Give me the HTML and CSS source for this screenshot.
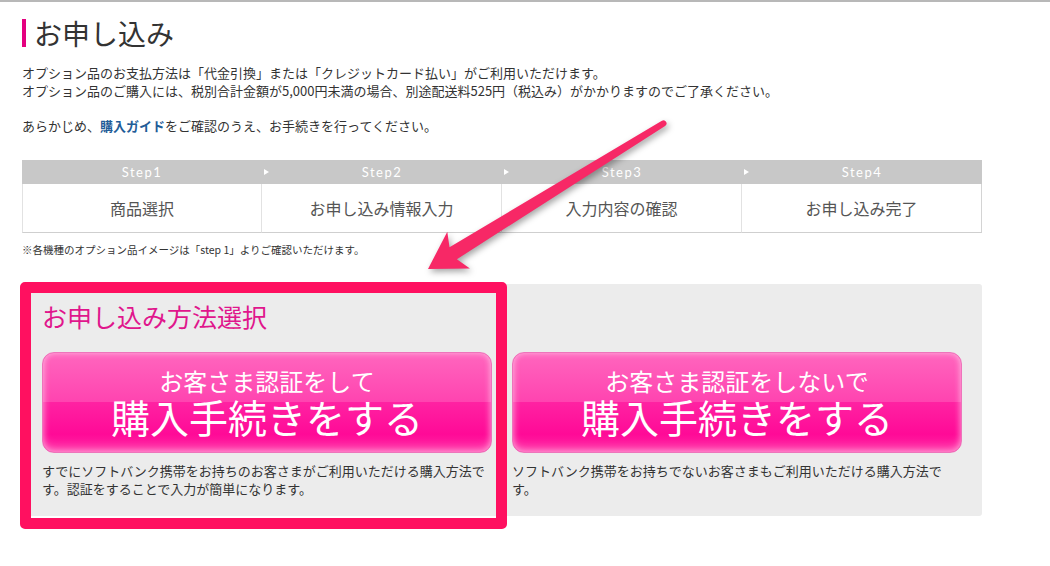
FILE: index.html
```html
<!DOCTYPE html>
<html lang="ja">

<head>
    <meta charset="UTF-8">
    <meta name="viewport" content="width=device-width, initial-scale=1.0">
    <title>お申し込み</title>
    <link rel="stylesheet" href="styles.css">
</head>

<body>
    <div class="page">
        <h1 class="title">お申し込み</h1>
        <p class="lead">オプション品のお支払方法は「代金引換」または「クレジットカード払い」がご利用いただけます。<br>オプション品のご購入には、税別合計金額が5,000円未満の場合、別途配送料525円（税込み）がかかりますのでご了承ください。</p>
        <p class="lead">あらかじめ、<a class="guide" href="#">購入ガイド</a>をご確認のうえ、お手続きを行ってください。</p>

        <div class="steps">
            <div class="step">
                <div class="step-no">Step1</div>
                <div class="step-name">商品選択</div>
            </div>
            <div class="step">
                <div class="step-no">Step2</div>
                <div class="step-name">お申し込み情報入力</div>
            </div>
            <div class="step">
                <div class="step-no">Step3</div>
                <div class="step-name">入力内容の確認</div>
            </div>
            <div class="step">
                <div class="step-no">Step4</div>
                <div class="step-name">お申し込み完了</div>
            </div>
        </div>
        <p class="note">※各機種のオプション品イメージは「step 1」よりご確認いただけます。</p>

        <div class="method-wrap">
            <div class="method">
                <h2 class="method-title">お申し込み方法選択</h2>
                <a class="buy-btn" href="#">
                    <span class="buy-sub">お客さま認証をして</span>
                    <span class="buy-main">購入手続きをする</span>
                </a>
                <a class="buy-btn" href="#">
                    <span class="buy-sub">お客さま認証をしないで</span>
                    <span class="buy-main">購入手続きをする</span>
                </a>
                <p class="method-desc">すでにソフトバンク携帯をお持ちのお客さまがご利用いただける購入方法です。認証をすることで入力が簡単になります。</p>
                <p class="method-desc">ソフトバンク携帯をお持ちでないお客さまもご利用いただける購入方法です。</p>
            </div>
            <div class="highlight"></div>
        </div>
    </div>

    <!-- annotation arrow -->
    <svg class="callout-arrow" width="1050" height="566" viewBox="0 0 1050 566">
        <path d="M428 267 L447.3 229.8 L449.5 245.3 L661.9 118.8 A3 3 0 0 1 665.1 123.9 L456.9 257.2 L469.9 266.4 Z" fill="#f72866" />
    </svg>
</body>

</html>
```

FILE: styles.css
```css
body {
    margin: 0;
    border-top: 2px solid #b8b8b8;
    background-color: #fff;
    color: #333;
    font-family: "Noto Sans CJK JP", "Liberation Sans", sans-serif;
    position: relative;
    min-height: 560px;
}

.page {
    width: 960px;
    padding-left: 22px;
}

.title {
    margin: 17px 0 0;
    padding-left: 8px;
    border-left: 4px solid #e4007f;
    font-size: 28px;
    font-weight: normal;
    line-height: 28px;
    color: #333;
}

.lead {
    margin: 17px 0 0;
    font-size: 13px;
    line-height: 18px;
}

.guide {
    color: #1f5d98;
    font-weight: bold;
    text-decoration: none;
}

.steps {
    display: grid;
    grid-template-columns: repeat(4, 1fr);
    margin-top: 25px;
}

.step-no {
    position: relative;
    height: 24px;
    background-color: #c8c8c8;
    color: #fff;
    font-family: Lato, "Liberation Sans", sans-serif;
    font-size: 13px;
    letter-spacing: 1.5px;
    line-height: 24px;
    text-align: center;
}

.step + .step .step-no::before {
    content: "";
    position: absolute;
    left: 2px;
    top: 9px;
    border-left: 5px solid #fff;
    border-top: 3.5px solid transparent;
    border-bottom: 3.5px solid transparent;
}

.step-name {
    height: 48px;
    border-bottom: 1px solid #cfcfcf;
    border-right: 1px solid #e2e2e2;
    color: #555;
    font-size: 16px;
    line-height: 48px;
    text-align: center;
}

.step:first-child .step-name {
    border-left: 1px solid #e2e2e2;
}

.step:last-child .step-name {
    border-right-color: #d4d4d4;
}

.note {
    margin: 9px 0 0;
    font-size: 10.5px;
    line-height: 16px;
}

.method-wrap {
    position: relative;
    margin-top: 26px;
}

.method {
    display: grid;
    grid-template-columns: 450px 450px;
    column-gap: 20px;
    padding: 16px 20px 18px;
    border-radius: 3px;
    background-color: #ececec;
}

.method-title {
    grid-column: 1 / -1;
    margin: 0 0 20px;
    color: #e0168c;
    font-size: 25px;
    font-weight: normal;
    line-height: 32px;
}

.buy-btn {
    display: flex;
    flex-direction: column;
    align-items: center;
    box-sizing: border-box;
    height: 101px;
    padding-top: 15px;
    border: 1px solid #ee74bb;
    border-radius: 12px;
    background: linear-gradient(#ff66be 0%, #ff44b0 49%, #ff22a2 50%, #ff0a97 82%, #ff2aa4 100%);
    box-shadow: inset 0 0 6px rgba(255, 255, 255, 0.5), inset 0 -5px 8px rgba(255, 200, 230, 0.3);
    color: #fff;
    text-decoration: none;
}

.buy-sub {
    font-size: 24px;
    line-height: 26px;
}

.buy-main {
    margin-top: 3px;
    font-size: 39px;
    line-height: 38px;
}

.method-desc {
    margin: 9px 0 0;
    font-size: 13px;
    line-height: 18px;
}

.highlight {
    position: absolute;
    left: -2px;
    top: -2px;
    width: 487px;
    height: 247px;
    box-sizing: border-box;
    border: 11px solid #ff1060;
    border-radius: 5px;
}

.callout-arrow {
    position: absolute;
    left: 0;
    top: 0;
    pointer-events: none;
    filter: drop-shadow(2px 3px 3px rgba(0, 0, 0, 0.35));
}
```
